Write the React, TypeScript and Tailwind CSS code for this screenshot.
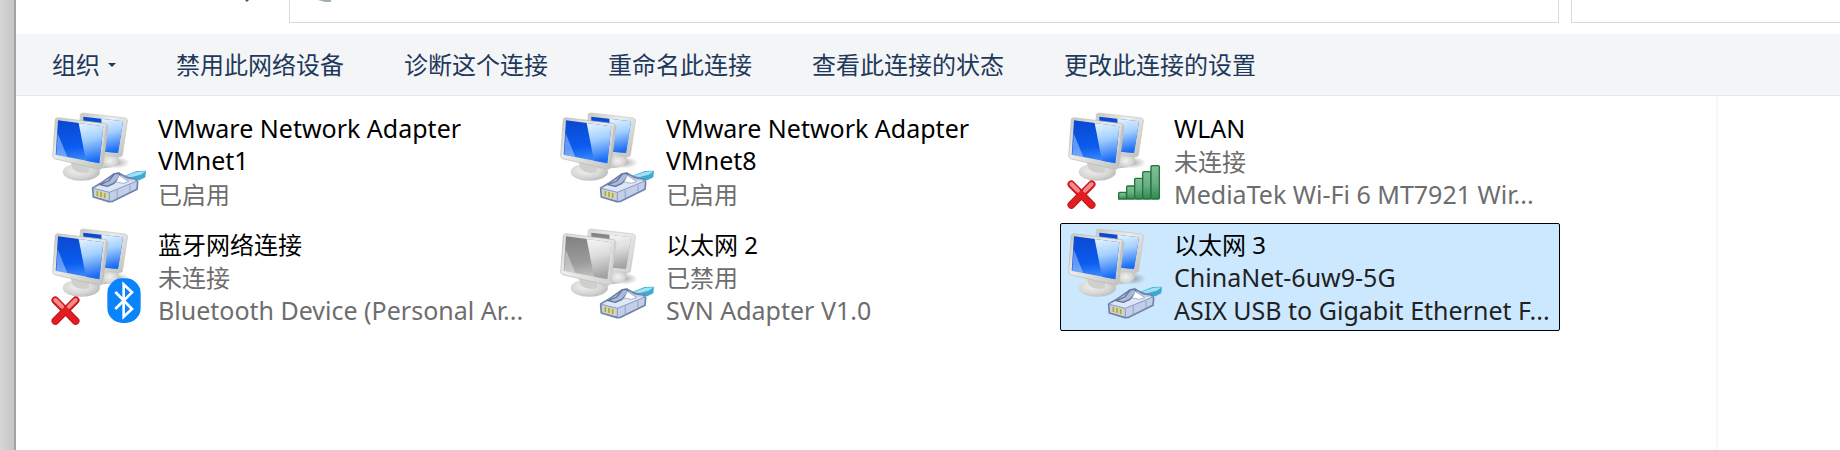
import { useId, useState } from 'react'

type Badge = 'ethernet' | 'bluetooth' | 'signal'

interface Connection {
  id: string
  name: string
  status: string
  device?: string
  badge: Badge
  disconnected?: boolean
  disabled?: boolean
}

const CONNECTIONS: Connection[] = [
  { id: 'vmnet1', name: 'VMware Network Adapter VMnet1', status: '已启用', badge: 'ethernet' },
  { id: 'vmnet8', name: 'VMware Network Adapter VMnet8', status: '已启用', badge: 'ethernet' },
  { id: 'wlan', name: 'WLAN', status: '未连接', device: 'MediaTek Wi-Fi 6 MT7921 Wir...', badge: 'signal', disconnected: true },
  { id: 'bluetooth', name: '蓝牙网络连接', status: '未连接', device: 'Bluetooth Device (Personal Ar...', badge: 'bluetooth', disconnected: true },
  { id: 'ethernet2', name: '以太网 2', status: '已禁用', device: 'SVN Adapter V1.0', badge: 'ethernet', disabled: true },
  { id: 'ethernet3', name: '以太网 3', status: 'ChinaNet-6uw9-5G', device: 'ASIX USB to Gigabit Ethernet F...', badge: 'ethernet' },
]

const COMMANDS = ['禁用此网络设备', '诊断这个连接', '重命名此连接', '查看此连接的状态', '更改此连接的设置']

// Latin glyphs run narrower than the CJK ones, so lines without CJK are set one size up
const textSize = (text: string) => (/[\u4e00-\u9fff]/.test(text) ? 'text-[24px]' : 'text-[25px]')

function EthernetBadge() {
  return (
    <g strokeLinejoin="round">
      <path d="M252 228 L290 213 L318 212 L316 232 L298 241 L274 243 Z" fill="#3fa9d2" />
      <path d="M256 228 L292 215 L317 214 L302 224 L272 232 Z" fill="#9fe0f4" />
      <path d="M158 264 L182 250 L222 222 L236 219 L262 233 L286 237 L293 246 L291 268 L218 304 L207 305 L160 291 Z" fill="#c3cfe8" stroke="#6f82aa" strokeWidth="5" />
      <path d="M160 265 L200 246 L290 242 L217 272 L208 276 Z" fill="#dde7f6" />
      <path d="M180 254 L206 243 L224 221 L238 220 L240 229 L222 250 L202 259 Z" fill="#a9badb" stroke="#61739c" strokeWidth="4" />
      <path d="M238 226 L266 245 L250 250 L228 246 Z" fill="#fff" stroke="#8495bb" strokeWidth="2" />
      <path d="M160 265 L208 277 L291 243 M208 277 L208 303" fill="none" stroke="#8a9bc0" strokeWidth="3" />
      <path d="M232 270 L232 295 M270 254 L270 276" fill="none" stroke="#9dadcd" strokeWidth="4" />
      <path d="M166 270 L203 280 L203 298 L166 288 Z" fill="#d9d8a4" />
      <path d="M172 273 V288 M183 276 V291 M194 279 V294" stroke="#aaa548" strokeWidth="5" />
    </g>
  )
}

function BluetoothBadge() {
  return (
    <g>
      <rect x="202" y="187" width="100" height="134" rx="45" fill="#0a84fb" />
      <path d="M226 228 L276 279 L251 302 V205 L276 229 L226 279" fill="none" stroke="#fff" strokeWidth="8" />
    </g>
  )
}

function SignalBadge({ fill }: { fill: string }) {
  return (
    <g fill={fill} stroke="#23753f" strokeWidth="4">
      <path d="M188 297 V280 q0 -3 3 -3 H211 V297 Z" />
      <rect x="212" y="258" width="24" height="39" rx="3" />
      <rect x="236" y="235" width="24" height="62" rx="3" />
      <rect x="260" y="215" width="25" height="82" rx="3" />
      <rect x="285" y="197" width="25" height="100" rx="3" />
    </g>
  )
}

function DisconnectedMark() {
  return (
    <g strokeLinecap="round" fill="none">
      <path d="M46 253 L107 315 M107 253 L46 315" stroke="#c4161a" strokeWidth="23" />
      <path d="M46 253 L107 315 M107 253 L46 315" stroke="#e01d21" strokeWidth="17" />
      <path d="M46 252 L66 272 M107 252 L87 272" stroke="#f08c8c" strokeWidth="12" />
    </g>
  )
}

function ConnectionIcon({ badge, disconnected, disabled }: Pick<Connection, 'badge' | 'disconnected' | 'disabled'>) {
  const id = useId()
  const dark = disabled ? '#9c9c9c' : '#0b5cf0'
  const deep = disabled ? '#808080' : '#0a48d0'
  const mid = disabled ? '#c2c2c2' : '#3f8cf8'
  const light = disabled ? '#f6f6f6' : '#e6f5ff'

  return (
    <svg viewBox="24 33 312 300" className="h-25 w-26 shrink-0" aria-hidden="true">
      <defs>
        <linearGradient id={`${id}front`} x1="0" y1="0" x2="0.1" y2="1">
          <stop offset="0" stopColor={deep} />
          <stop offset="0.65" stopColor={dark} />
          <stop offset="1" stopColor={mid} />
        </linearGradient>
        <linearGradient id={`${id}glare`} x1="0" y1="0" x2="0.15" y2="1">
          <stop offset="0" stopColor={light} />
          <stop offset="0.45" stopColor={disabled ? '#dedede' : '#a4d0ff'} />
          <stop offset="1" stopColor={disabled ? '#a2a2a2' : '#1b6cf4'} />
        </linearGradient>
        <linearGradient id={`${id}frame`} x1="0" y1="0" x2="1" y2="1">
          <stop offset="0" stopColor={disabled ? '#d8d8d8' : '#c4c4c1'} />
          <stop offset="0.4" stopColor="#ececea" />
          <stop offset="1" stopColor={disabled ? '#cfcfcf' : '#bebebb'} />
        </linearGradient>
        <radialGradient id={`${id}base`} cx="0.4" cy="0.4" r="0.65">
          <stop offset="0" stopColor="#f2f2f1" />
          <stop offset="0.65" stopColor="#d6d6d5" />
          <stop offset="1" stopColor="#bcbcbb" />
        </radialGradient>
        <radialGradient id={`${id}shadow`}>
          <stop offset="0" stopColor="#555" stopOpacity="0.5" />
          <stop offset="1" stopColor="#555" stopOpacity="0" />
        </radialGradient>
        <linearGradient id={`${id}bars`} x1="0" y1="0" x2="0" y2="1">
          <stop offset="0" stopColor="#7dc094" />
          <stop offset="0.5" stopColor="#6aaf83" />
          <stop offset="1" stopColor="#2f8b50" />
        </linearGradient>
      </defs>

      {/* rear monitor */}
      <ellipse cx="228" cy="188" rx="42" ry="18" fill={`url(#${id}shadow)`} />
      <path d="M190 168 H234 L238 183 Q230 204 190 205 Z" fill={`url(#${id}base)`} />
      <path d="M121 42 L128 39 L257 54 L263 60 L247 167 L240 171 L180 164 L116 140 Z" fill={`url(#${id}frame)`} stroke="#c6c6c3" strokeWidth="2" />
      <path d="M130 50 L249 64 L234 159 L184 154 L130 100 Z" fill={`url(#${id}front)`} />
      <path d="M184 56 L249 64 L234 159 L190 155 Z" fill={`url(#${id}glare)`} />

      {/* front monitor */}
      <ellipse cx="124" cy="216" rx="56" ry="26" fill={`url(#${id}base)`} />
      <path d="M92 185 L148 199 L146 216 Q118 224 98 208 Z" fill="#cfcfce" />
      <path d="M46 57 L53 53 L198 71 L204 78 L188 204 L180 208 L43 176 L38 169 Z" fill={`url(#${id}frame)`} stroke="#b9b9b5" strokeWidth="2" />
      <path d="M54 61 L190 79 L178 190 L47 164 Z" fill={`url(#${id}front)`} />
      <path d="M116 69 L190 79 L178 190 L138 182 Z" fill={`url(#${id}glare)`} />
      <path d="M53 100 L82 171 L49 164 Z" fill={light} opacity="0.4" />
      <path d="M198 74 L204 80 L188 203 L181 207 Z" fill={disabled ? '#d2d2d2' : '#c2c2c0'} />

      {badge === 'ethernet' && <EthernetBadge />}
      {badge === 'bluetooth' && <BluetoothBadge />}
      {badge === 'signal' && <SignalBadge fill={`url(#${id}bars)`} />}
      {disconnected && <DisconnectedMark />}
    </svg>
  )
}

interface ConnectionTileProps {
  connection: Connection
  selected: boolean
  onSelect: (id: string) => void
}

function ConnectionTile({ connection, selected, onSelect }: ConnectionTileProps) {
  const { id, name, status, device } = connection
  return (
    <button
      type="button"
      aria-pressed={selected}
      onClick={() => onSelect(id)}
      className={`flex h-[108px] w-[500px] gap-1.5 rounded-xs border pl-[3px] pt-[3px] text-left ${
        selected ? 'border-black bg-[#cce8ff] text-[#222]' : 'border-transparent text-[#6d6d6d]'
      }`}
    >
      <ConnectionIcon badge={connection.badge} disconnected={connection.disconnected} disabled={connection.disabled} />
      <span className="flex min-w-0 flex-1 flex-col pt-px">
        <span className={`text-black ${textSize(name)} ${device ? 'leading-[33px]' : 'w-80 pb-0.5 leading-8'}`}>{name}</span>
        <span className={`leading-[33px] ${textSize(status)}`}>{status}</span>
        {device && <span className={`whitespace-nowrap leading-[33px] ${textSize(device)}`}>{device}</span>}
      </span>
    </button>
  )
}

export default function App() {
  const [selectedId, setSelectedId] = useState('ethernet3')

  return (
    <div className="flex min-h-screen bg-white font-['Noto_Sans','Noto_Sans_CJK_SC',sans-serif] text-[24px]">
      <div className="w-4 shrink-0 border-r-2 border-[#a3a3a3] bg-linear-to-r from-[#d6d6d6] to-[#c6c6c6]" />

      <div className="flex min-w-0 flex-1 flex-col">
        <div className="flex h-[34px] items-start">
          {/* lower tip of the up arrow */}
          <div className="flex w-[273px] shrink-0 justify-end pr-10">
            <svg viewBox="0 0 4 2" className="h-0.5 w-1" fill="#555" aria-hidden="true">
              <path d="M0 0h4L2 2z" />
            </svg>
          </div>
          <div className="mr-3 flex h-[23px] w-[1270px] border border-t-0 border-[#d9d9d9] pl-7">
            <svg viewBox="0 0 14 2" className="h-0.5 w-3.5" fill="#9fb0ae" aria-hidden="true">
              <path d="M0 0h13v2H7z" />
            </svg>
          </div>
          <div className="h-[23px] flex-1 border-b border-l border-[#d9d9d9]" />
        </div>

        <nav className="flex h-[62px] items-center gap-[60px] border-b border-[#e5e8ec] bg-[#f4f5f7] pl-9 text-[#1e395b]">
          <button type="button" className="flex items-center gap-2">
            组织
            <svg viewBox="0 0 8 4" className="h-1 w-2" fill="currentColor" aria-hidden="true">
              <path d="M0 0h8L4 4z" />
            </svg>
          </button>
          {COMMANDS.map((command) => (
            <button key={command} type="button" className="whitespace-nowrap">
              {command}
            </button>
          ))}
        </nav>

        <div className="flex flex-1">
          <main className="grid flex-1 grid-cols-[500px_500px_500px] content-start gap-2 pl-7 pt-[11px]">
            {CONNECTIONS.map((connection) => (
              <ConnectionTile
                key={connection.id}
                connection={connection}
                selected={connection.id === selectedId}
                onSelect={setSelectedId}
              />
            ))}
          </main>
          <aside className="w-31 border-l-2 border-[#f7f7f7]" />
        </div>
      </div>
    </div>
  )
}
